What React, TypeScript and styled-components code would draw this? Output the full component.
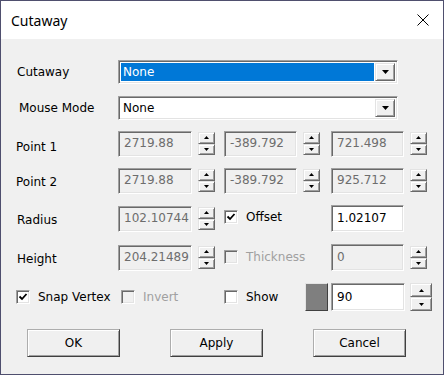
import React from 'react';
import styled, { createGlobalStyle } from 'styled-components';

const GlobalStyle = createGlobalStyle`
  html, body {
    margin: 0;
    padding: 0;
    background: #ffffff;
  }
  body {
    font-family: 'DejaVu Sans', Tahoma, sans-serif;
    font-size: 12px;
    color: #000;
  }
`;

const Window = styled.div`
  width: 444px;
  height: 375px;
  box-sizing: border-box;
  border: 1px solid #4f4f6e;
  background: #f0f0f0;
  display: flex;
  flex-direction: column;
`;

const TitleBar = styled.div`
  height: 38px;
  flex: none;
  background: #ffffff;
  display: flex;
  align-items: center;
  justify-content: space-between;
  padding: 0 14px 0 10px;
  .title {
    font-family: 'Noto Sans', 'Open Sans', sans-serif;
    font-size: 14px;
    color: #000;
  }
`;

const Content = styled.div`
  padding: 21px 0 0 14px;
  display: flex;
  flex-direction: column;
`;

const ComboRow = styled.div<{ $top: number }>`
  display: flex;
  align-items: center;
  margin-top: ${(p) => p.$top}px;
  height: 24px;
`;

const GridRow = styled.div<{ $top: number; $h?: number }>`
  display: grid;
  grid-template-columns: 103px 106px 107px 1fr;
  align-items: center;
  margin-top: ${(p) => p.$top}px;
  height: ${(p) => p.$h ?? 27}px;
`;

const Label = styled.div<{ $indent?: number; $drop?: number }>`
  width: 103px;
  flex: none;
  padding-left: ${(p) => p.$indent ?? 0}px;
  padding-top: ${(p) => p.$drop ?? 0}px;
  box-sizing: border-box;
  white-space: nowrap;
`;

const Combo = styled.div<{ $selected?: boolean }>`
  width: 280px;
  height: 24px;
  box-sizing: border-box;
  border: 1px solid;
  border-color: #a0a0a0 #ffffff #ffffff #a0a0a0;
  box-shadow: inset 1px 1px 0 #696969, inset -1px -1px 0 #e3e3e3;
  background: #ffffff;
  display: flex;
  padding: 2px;
  .value {
    flex: 1;
    margin-right: 1px;
    display: flex;
    align-items: center;
    padding-left: 2px;
    background: ${(p) => (p.$selected ? '#0078d7' : '#ffffff')};
    color: ${(p) => (p.$selected ? '#ffffff' : '#000000')};
  }
`;

const RaisedButton = styled.div`
  box-sizing: border-box;
  background: #f0f0f0;
  border: 1px solid;
  border-color: #e3e3e3 #696969 #696969 #e3e3e3;
  box-shadow: inset 1px 1px 0 #ffffff, inset -1px -1px 0 #a0a0a0;
  display: flex;
  align-items: center;
  justify-content: center;
`;

const DropButton = styled(RaisedButton)`
  width: 20px;
  height: 100%;
`;

const Group = styled.div`
  display: flex;
  align-items: center;
  gap: 6px;
`;

const Field = styled.div<{ $w: number; $h?: number; $disabled?: boolean }>`
  width: ${(p) => p.$w}px;
  height: ${(p) => p.$h ?? 26}px;
  box-sizing: border-box;
  border: 1px solid;
  border-color: #a0a0a0 #ffffff #ffffff #a0a0a0;
  box-shadow: inset 1px 1px 0 #696969, inset -1px -1px 0 #e3e3e3;
  background: ${(p) => (p.$disabled ? '#f0f0f0' : '#ffffff')};
  color: ${(p) => (p.$disabled ? '#6d6d6d' : '#000000')};
  display: flex;
  align-items: center;
  padding: 0 0 1px 5px;
  white-space: nowrap;
  overflow: hidden;
`;

const Spinner = styled.div<{ $w?: number; $h?: number }>`
  width: ${(p) => p.$w ?? 17}px;
  height: ${(p) => p.$h ?? 23}px;
  display: flex;
  flex-direction: column;
  flex: none;
  & > div {
    flex: 1;
  }
`;

const CheckWrap = styled.div<{ $disabled?: boolean; $indent?: number; $lift?: number }>`
  display: flex;
  align-items: center;
  gap: 8px;
  padding-left: ${(p) => p.$indent ?? 0}px;
  margin-top: ${(p) => -(p.$lift ?? 0)}px;
  color: ${(p) => (p.$disabled ? '#a0a0a0' : '#000000')};
  white-space: nowrap;
`;

const Box = styled.div<{ $disabled?: boolean }>`
  width: 14px;
  height: 14px;
  box-sizing: border-box;
  border: 1px solid;
  border-color: #a0a0a0 #ffffff #ffffff #a0a0a0;
  box-shadow: inset 1px 1px 0 #696969, inset -1px -1px 0 #e3e3e3;
  background: ${(p) => (p.$disabled ? '#f0f0f0' : '#ffffff')};
  display: flex;
  align-items: center;
  justify-content: center;
`;

const ShowCell = styled.div`
  display: flex;
  align-items: center;
  justify-content: space-between;
  padding-right: 3px;
`;

const Swatch = styled.div`
  width: 23px;
  height: 28px;
  box-sizing: border-box;
  background: #7f7f7f;
  border: 1px solid;
  border-color: #e3e3e3 #404040 #404040 #e3e3e3;
`;

const ButtonRow = styled.div`
  display: flex;
  gap: 50px;
  margin-top: 18px;
  padding-left: 12px;
`;

const DialogButton = styled(RaisedButton)`
  width: 93px;
  height: 28px;
  border-color: #adadad #404040 #404040 #adadad;
`;

const UpArrow = () => (
  <svg width="5" height="3" viewBox="0 0 5 3">
    <polygon points="2.5,0 5,3 0,3" fill="#000" />
  </svg>
);

const DownArrow = ({ w = 5, h = 3 }: { w?: number; h?: number }) => (
  <svg width={w} height={h} viewBox={`0 0 ${w} ${h}`}>
    <polygon points={`0,0 ${w},0 ${w / 2},${h}`} fill="#000" />
  </svg>
);

const Spin = ({ w, h }: { w?: number; h?: number }) => (
  <Spinner $w={w} $h={h}>
    <RaisedButton>
      <UpArrow />
    </RaisedButton>
    <RaisedButton>
      <DownArrow />
    </RaisedButton>
  </Spinner>
);

const Check = ({ checked, disabled, label, indent, lift }: { checked?: boolean; disabled?: boolean; label: string; indent?: number; lift?: number }) => (
  <CheckWrap $disabled={disabled} $indent={indent} $lift={lift}>
    <Box $disabled={disabled}>
      {checked && (
        <svg width="10" height="10" viewBox="0 0 10 10">
          <polyline points="1.5,4.5 4,7 8.5,2" fill="none" stroke="#000" strokeWidth="1.8" />
        </svg>
      )}
    </Box>
    <span>{label}</span>
  </CheckWrap>
);

const App = () => {
  return (
    <>
      <GlobalStyle />
      <Window>
        <TitleBar>
          <span className="title">Cutaway</span>
          <svg width="12" height="12" viewBox="0 0 12 12">
            <path d="M0.5 0.5 L11.5 11.5 M11.5 0.5 L0.5 11.5" stroke="#000" strokeWidth="1" />
          </svg>
        </TitleBar>
        <Content>
          <ComboRow $top={0}>
            <Label $indent={2}>Cutaway</Label>
            <Combo $selected>
              <div className="value">None</div>
              <DropButton>
                <DownArrow w={7} h={4} />
              </DropButton>
            </Combo>
          </ComboRow>
          <ComboRow $top={12}>
            <Label $indent={4}>Mouse Mode</Label>
            <Combo>
              <div className="value">None</div>
              <DropButton>
                <DownArrow w={7} h={4} />
              </DropButton>
            </Combo>
          </ComboRow>

          <GridRow $top={10}>
            <Label $indent={1} $drop={6}>Point 1</Label>
            <Group>
              <Field $w={74} $disabled>2719.88</Field>
              <Spin />
            </Group>
            <Group>
              <Field $w={73} $disabled>-389.792</Field>
              <Spin />
            </Group>
            <Group>
              <Field $w={73} $disabled>721.498</Field>
              <Spin />
            </Group>
          </GridRow>

          <GridRow $top={10}>
            <Label $indent={1} $drop={2}>Point 2</Label>
            <Group>
              <Field $w={74} $disabled>2719.88</Field>
              <Spin />
            </Group>
            <Group>
              <Field $w={73} $disabled>-389.792</Field>
              <Spin />
            </Group>
            <Group>
              <Field $w={73} $disabled>925.712</Field>
              <Spin />
            </Group>
          </GridRow>

          <GridRow $top={11}>
            <Label $indent={2} $drop={3}>Radius</Label>
            <Group>
              <Field $w={74} $disabled>102.10744</Field>
              <Spin />
            </Group>
            <Check checked label="Offset" lift={3} />
            <Field $w={73} $h={27}>1.02107</Field>
          </GridRow>

          <GridRow $top={12}>
            <Label $indent={2} $drop={2}>Height</Label>
            <Group>
              <Field $w={74} $disabled>204.21489</Field>
              <Spin />
            </Group>
            <Check disabled label="Thickness" lift={2} />
            <Group>
              <Field $w={73} $h={27} $disabled>0</Field>
              <Spin />
            </Group>
          </GridRow>

          <GridRow $top={12} $h={28}>
            <Check checked label="Snap Vertex" indent={1} />
            <Check disabled label="Invert" indent={3} />
            <ShowCell>
              <Check label="Show" />
              <Swatch />
            </ShowCell>
            <Group style={{ gap: 5 }}>
              <Field $w={74} $h={28}>90</Field>
              <Spin w={22} h={28} />
            </Group>
          </GridRow>

          <ButtonRow>
            <DialogButton>OK</DialogButton>
            <DialogButton>Apply</DialogButton>
            <DialogButton>Cancel</DialogButton>
          </ButtonRow>
        </Content>
      </Window>
    </>
  );
};

export default App;
